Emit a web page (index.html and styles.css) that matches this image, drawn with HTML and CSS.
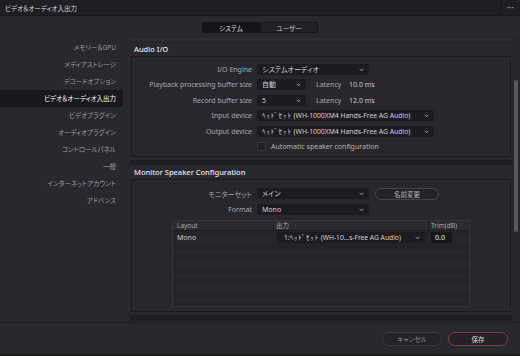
FILE: index.html
```html
<!DOCTYPE html>
<html lang="ja">
<head>
    <meta charset="UTF-8">
    <title>ビデオ＆オーディオ入出力</title>
    <link rel="stylesheet" href="styles.css">
</head>
<body>
<div class="window">
    <header class="titlebar">
        <span class="title">ビデオ＆オーディオ入出力</span>
        <span class="more">•••</span>
    </header>

    <div class="tabs">
        <div class="tab-group">
            <button class="tab active">システム</button>
            <button class="tab">ユーザー</button>
        </div>
    </div>

    <div class="body">
        <nav class="sidebar">
            <a>メモリー＆GPU</a>
            <a>メディアストレージ</a>
            <a>デコードオプション</a>
            <a class="selected">ビデオ＆オーディオ入出力</a>
            <a>ビデオプラグイン</a>
            <a>オーディオプラグイン</a>
            <a>コントロールパネル</a>
            <a>一般</a>
            <a>インターネットアカウント</a>
            <a>アドバンス</a>
        </nav>

        <main class="main">
            <div class="panel">
                <div class="shade"></div>
                <h2>Audio I/O</h2>
                <section class="box box-audio">
                    <div class="row">
                        <label>I/O Engine</label>
                        <div class="select w-wide">システムオーディオ
                            <svg class="chev" viewBox="0 0 8 5"><polyline points="1,1 4,4 7,1"/></svg>
                        </div>
                    </div>
                    <div class="row">
                        <label>Playback processing buffer size</label>
                        <div class="select w-small">自動
                            <svg class="chev" viewBox="0 0 8 5"><polyline points="1,1 4,4 7,1"/></svg>
                        </div>
                        <span class="latency">Latency</span>
                        <span class="value">10.0 ms</span>
                    </div>
                    <div class="row">
                        <label>Record buffer size</label>
                        <div class="select w-small">5
                            <svg class="chev" viewBox="0 0 8 5"><polyline points="1,1 4,4 7,1"/></svg>
                        </div>
                        <span class="latency">Latency</span>
                        <span class="value">12.0 ms</span>
                    </div>
                    <div class="row">
                        <label>Input device</label>
                        <div class="select w-device"><span class="kana">ﾍｯﾄﾞｾｯﾄ</span> (WH-1000XM4 Hands-Free AG Audio)
                            <svg class="chev" viewBox="0 0 8 5"><polyline points="1,1 4,4 7,1"/></svg>
                        </div>
                    </div>
                    <div class="row">
                        <label>Output device</label>
                        <div class="select w-device"><span class="kana">ﾍｯﾄﾞｾｯﾄ</span> (WH-1000XM4 Hands-Free AG Audio)
                            <svg class="chev" viewBox="0 0 8 5"><polyline points="1,1 4,4 7,1"/></svg>
                        </div>
                    </div>
                    <div class="row">
                        <label></label>
                        <span class="checkbox"></span>
                        <span class="check-text">Automatic speaker configuration</span>
                    </div>
                </section>

                <div class="band"></div>
                <h2>Monitor Speaker Configuration</h2>
                <section class="box box-monitor">
                    <div class="row">
                        <label>モニターセット</label>
                        <div class="select w-wide">メイン
                            <svg class="chev" viewBox="0 0 8 5"><polyline points="1,1 4,4 7,1"/></svg>
                        </div>
                        <button class="pill">名前変更</button>
                    </div>
                    <div class="row">
                        <label>Format</label>
                        <div class="select w-wide">Mono
                            <svg class="chev" viewBox="0 0 8 5"><polyline points="1,1 4,4 7,1"/></svg>
                        </div>
                    </div>

                    <div class="table">
                        <div class="thead">
                            <span class="col-layout">Layout</span>
                            <span class="col-out">出力</span>
                            <span class="col-trim">Trim(dB)</span>
                        </div>
                        <div class="tbody">
                            <div class="trow">
                                <span class="col-layout">Mono</span>
                                <span class="col-out">
                                    <span class="select out-select">1:<span class="kana">ﾍｯﾄﾞｾｯﾄ</span> (WH-10...s-Free AG Audio)
                                        <svg class="chev" viewBox="0 0 8 5"><polyline points="1,1 4,4 7,1"/></svg>
                                    </span>
                                </span>
                                <span class="col-trim"><span class="trim">0.0</span></span>
                            </div>
                        </div>
                    </div>
                </section>
                <div class="band band-bottom"></div>
            </div>
            <div class="scrollbar"><div class="thumb"></div></div>
        </main>
    </div>

    <footer class="footer">
        <button class="pill btn cancel">キャンセル</button>
        <button class="pill btn save">保存</button>
    </footer>
</div>
</body>
</html>
```

FILE: styles.css
```css
* {
    box-sizing: border-box;
}
body {
    margin: 0;
    background-color: #1c1c20;
    font-family: "Noto Sans", "Noto Sans CJK JP", sans-serif;
    font-feature-settings: "palt";
}
.window {
    width: 520px;
    height: 356px;
    background-color: #28282d;
    display: flex;
    flex-direction: column;
    overflow: hidden;
    border-bottom: 2px solid #1a1a1d;
}

/* title bar */
.titlebar {
    height: 16px;
    flex: none;
    display: flex;
    align-items: center;
    justify-content: space-between;
    background-color: #1f1f23;
    border-bottom: 1px solid #18181b;
}
.title {
    padding-left: 5px;
    font-size: 6.5px;
    color: #d8d8dc;
}
.more {
    width: 20px;
    height: 100%;
    border-left: 1px solid #141417;
    display: flex;
    align-items: center;
    justify-content: center;
    font-size: 5px;
    letter-spacing: 0.5px;
    color: #b0b0b4;
}

/* tabs */
.tabs {
    height: 21px;
    flex: none;
    display: flex;
    justify-content: center;
    padding-top: 6px;
}
.tab-group {
    display: flex;
    height: 11px;
}
.tab {
    width: 58px;
    height: 11px;
    padding: 0;
    font-family: inherit;
    font-feature-settings: "palt";
    font-size: 6.5px;
    color: #c8c8cc;
    background-color: #222226;
    border: 1px solid #151518;
    border-radius: 2px;
}
.tab.active {
    background-color: #141417;
    color: #e4e4e8;
}

/* main body */
.body {
    flex: 1;
    display: flex;
    min-height: 0;
}
.sidebar {
    width: 130px;
    flex: none;
    padding-top: 2px;
    display: flex;
    flex-direction: column;
}
.sidebar a {
    width: 123px;
    height: 17px;
    line-height: 17px;
    padding-right: 7px;
    text-align: right;
    font-size: 6.5px;
    color: #9c9ca2;
}
.sidebar a.selected {
    background-color: #19191c;
    color: #ffffff;
}

.main {
    flex: 1;
    display: flex;
}
.panel {
    width: 383px;
    display: flex;
    flex-direction: column;
    overflow: hidden;
}
.shade {
    height: 6px;
    flex: none;
    background: linear-gradient(#26262b, #2f2f34 40%, #232327);
}
.panel h2 {
    margin: 0;
    height: 13px;
    flex: none;
    line-height: 13px;
    padding-left: 4px;
    font-size: 7.5px;
    font-weight: 500;
    color: #e8e8ec;
}
.box {
    flex: none;
    margin: 0 2px 0 1px;
    background-color: #27272c;
    border: 1px solid #1a1a1d;
    display: flex;
    flex-direction: column;
}
.box-audio {
    height: 101px;
    padding-top: 7px;
    gap: 4.4px;
}
.box-monitor {
    height: 133px;
    padding-top: 8px;
    gap: 5px;
}
.band {
    height: 9px;
    flex: none;
    background: linear-gradient(#28282d 30%, #1f1f23 35%, #1f1f23 85%, #28282d 90%);
}
.band-bottom {
    height: 10px;
}

.row {
    height: 11px;
    flex: none;
    display: flex;
    align-items: center;
    font-size: 7px;
}
.row label {
    width: 120px;
    flex: none;
    margin-right: 5px;
    text-align: right;
    color: #a8a8ae;
}
.select {
    position: relative;
    height: 11px;
    line-height: 11px;
    padding-left: 5px;
    font-size: 7px;
    color: #d0d0d4;
    background-color: #1c1c20;
    border-radius: 2px;
    white-space: nowrap;
    overflow: hidden;
}
.chev {
    position: absolute;
    right: 5px;
    top: 4px;
    width: 5px;
    height: 3.5px;
    fill: none;
    stroke: #c8c8cc;
    stroke-width: 1.3;
}
.w-wide {
    width: 112px;
}
.w-small {
    width: 49px;
}
.w-device {
    width: 177px;
    font-size: 6.8px;
    font-feature-settings: normal;
}
.kana {
    letter-spacing: 1px;
}
.latency {
    margin-left: 10px;
    width: 33px;
    color: #a8a8ae;
}
.value {
    color: #c8c8cc;
}
.checkbox {
    width: 9px;
    height: 9px;
    background-color: #202024;
    border: 1px solid #38383d;
    border-radius: 1px;
}
.check-text {
    margin-left: 5px;
    color: #b4b4ba;
}
.pill {
    font-family: inherit;
    font-feature-settings: "palt";
    background-color: #232327;
    border: 1px solid #44444a;
    border-radius: 7px;
    color: #b8b8bc;
    padding: 0;
}
.row .pill {
    margin-left: 6px;
    width: 64px;
    height: 12px;
    font-size: 6.5px;
}

/* output table */
.table {
    margin: 0 0 0 40px;
    width: 298px;
    height: 87px;
    border: 1px solid #34343a;
    display: flex;
    flex-direction: column;
    font-size: 6.5px;
}
.thead {
    height: 10px;
    flex: none;
    display: flex;
    background-color: #2b2b30;
    border-bottom: 1px solid #1c1c20;
    color: #a8a8ae;
    line-height: 9px;
}
.col-layout {
    width: 100px;
    padding-left: 4px;
}
.col-out {
    width: 155px;
    padding-left: 2px;
}
.col-trim {
    flex: 1;
    padding-left: 2px;
}
.thead .col-out,
.thead .col-trim {
    border-left: 1px solid #1c1c20;
}
.tbody {
    flex: 1;
    background: repeating-linear-gradient(#232328 0, #232328 6px, #26262b 6px, #26262b 12px);
}
.trow {
    display: flex;
    align-items: center;
    height: 13px;
    color: #c8c8cc;
    font-size: 7px;
}
.out-select {
    display: block;
    margin-left: 2px;
    width: 148px;
    height: 11px;
    padding-left: 7px;
    font-size: 6.7px;
    font-feature-settings: normal;
}
.trim {
    display: block;
    margin-left: 1px;
    width: 21px;
    height: 11px;
    line-height: 11px;
    padding-left: 4px;
    background-color: #151518;
    color: #e8e8ec;
}

.scrollbar {
    width: 7px;
    padding: 43px 0 0 1px;
    background-color: #26262a;
}
.thumb {
    width: 4px;
    height: 152px;
    border-radius: 2px;
    background-color: #56565c;
}

/* footer */
.footer {
    height: 32px;
    flex: none;
    display: flex;
    justify-content: flex-end;
    gap: 6px;
    padding: 9px 12px 0 0;
    border-top: 1px solid #1d1d21;
}
.btn {
    width: 60px;
    height: 14px;
    font-size: 6.5px;
}
.cancel {
    color: #8c8c92;
    border-color: #3c3c42;
}
.save {
    color: #d8d8dc;
    border-color: #8a3a46;
}
```
